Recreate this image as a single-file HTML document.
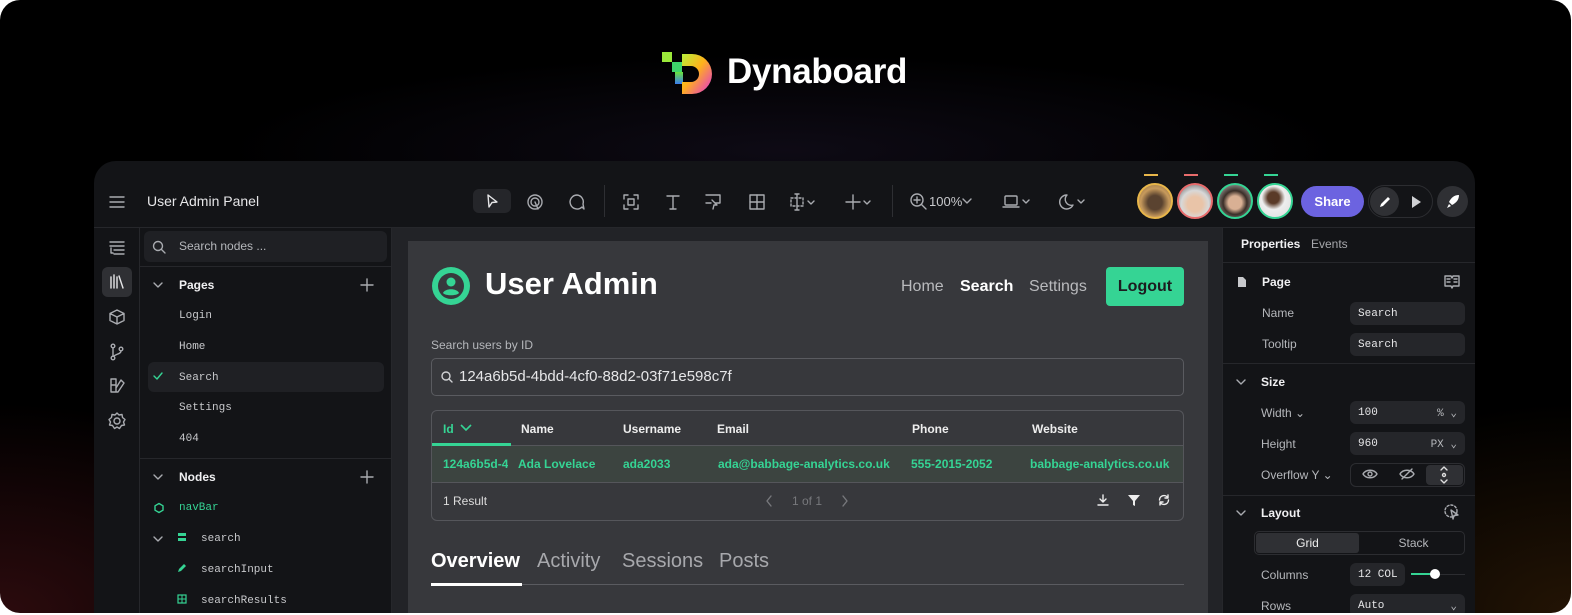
<!DOCTYPE html>
<html><head><meta charset="utf-8"><style>
*{box-sizing:border-box;margin:0;padding:0}
body{width:1572px;height:615px;background:#fff;font-family:"Liberation Sans",sans-serif;overflow:hidden;position:relative}
.frame{position:absolute;left:0;top:0;width:1571px;height:613px;border-radius:20px;overflow:hidden;
background:radial-gradient(ellipse 500px 300px at 0% 100%,rgba(80,20,25,.55),transparent 70%),radial-gradient(ellipse 450px 300px at 100% 100%,rgba(70,40,10,.5),transparent 70%),radial-gradient(ellipse 700px 120px at 50% 150px,rgba(40,30,60,.35),transparent 80%),#000}
.a{position:absolute}
.win{position:absolute;left:94px;top:161px;width:1381px;height:460px;background:#131417;border-radius:22px 22px 0 0;overflow:hidden}
.t{color:#e6e6e8;font-size:13px}
.mono{font-family:"Liberation Mono",monospace}
svg{position:absolute}
.ic{stroke:#a9abb0;fill:none;stroke-width:1.4;stroke-linecap:round;stroke-linejoin:round}
.inp{position:absolute;background:#25262a;border-radius:6px;font-family:"Liberation Mono",monospace;font-size:11px;color:#e6e6e8;padding-left:8px;display:flex;align-items:center}
.lbl{position:absolute;font-size:12px;color:#b5b7bb}
</style></head><body>
<div class="frame">
<svg style="left:662px;top:52px" width="50" height="44" viewBox="0 0 50 44">
<defs><linearGradient id="g" x1="0" y1="0" x2="1" y2="1"><stop offset="0" stop-color="#b7f03a"/><stop offset=".45" stop-color="#ffb21a"/><stop offset="1" stop-color="#e22fd9"/></linearGradient>
<linearGradient id="g2" x1="0" y1="0" x2="0" y2="1"><stop offset="0" stop-color="#6ae23a"/><stop offset="1" stop-color="#3a7bf0"/></linearGradient></defs>
<rect x="0" y="0" width="10" height="10" fill="#9be83a"/>
<rect x="10" y="10" width="10" height="10" fill="#3ed46a"/>
<rect x="13" y="20" width="8" height="12" fill="url(#g2)"/>
<path d="M20 2 H30 A20 20 0 0 1 30 42 H20 V30 H29 A8 8 0 0 0 29 14 H20 Z" fill="url(#g)"/>
</svg>
<div class="a" style="left:727px;top:52px;font-size:35px;font-weight:bold;color:#fff;letter-spacing:-0.3px">Dynaboard</div>

<div class="win">
 <div class="a" style="left:0;top:66px;width:1381px;height:1px;background:#26272b"></div>
 <svg style="left:15px;top:34px" width="16" height="14"><path class="ic" d="M1 2H15M1 7H15M1 12H15"/></svg>
 <div class="a t" style="left:53px;top:32px;font-size:14px">User Admin Panel</div>
 <div class="a" style="left:379px;top:28px;width:38px;height:24px;background:#25262a;border-radius:6px"></div>
 <svg style="left:390px;top:32px" width="16" height="16"><path class="ic" style="stroke:#e6e6e8" d="M4 2L13 9L8 9.5L5 14Z"/></svg>
 <svg style="left:432px;top:32px" width="18" height="18"><circle class="ic" cx="9" cy="9" r="7"/><circle class="ic" cx="9" cy="9" r="4"/><path class="ic" d="M9 9L12 16"/></svg>
 <svg style="left:474px;top:32px" width="18" height="18"><path class="ic" d="M9 2A7 7 0 1 0 14 14L16 16L15 11A7 7 0 0 0 9 2Z"/></svg>
 <div class="a" style="left:510px;top:24px;width:1px;height:32px;background:#2e2f33"></div>
 <svg style="left:528px;top:32px" width="18" height="18"><path class="ic" d="M2 6V2H6M12 2H16V6M16 12V16H12M6 16H2V12"/><rect class="ic" x="6" y="6" width="6" height="6"/></svg>
 <svg style="left:570px;top:32px" width="18" height="18"><path class="ic" d="M3 3H15M9 3V16M6 16H12"/></svg>
 <svg style="left:610px;top:32px" width="18" height="18"><path class="ic" d="M2 2H16V10H11M7 10H2Z"/><path class="ic" d="M8 7L13 12L10 12L9 16"/></svg>
 <svg style="left:654px;top:32px" width="18" height="18"><rect class="ic" x="2" y="2" width="14" height="14"/><path class="ic" d="M9 2V16M2 9H16"/></svg>
 <svg style="left:695px;top:32px" width="32" height="18"><rect class="ic" x="2" y="5" width="12" height="8" stroke-dasharray="2 2"/><path class="ic" d="M8 1V17M6 1H10M6 17H10M19 8L22 11L25 8"/></svg>
 <svg style="left:750px;top:32px" width="32" height="18"><path class="ic" d="M2 9H16M9 2V16M20 8L23 11L26 8"/></svg>
 <div class="a" style="left:798px;top:24px;width:1px;height:32px;background:#2e2f33"></div>
 <svg style="left:815px;top:31px" width="20" height="20"><circle class="ic" cx="8" cy="8" r="6"/><path class="ic" d="M12.5 12.5L17 17M8 5V11M5 8H11"/></svg>
 <div class="a t" style="left:835px;top:33px;font-size:13px;color:#c8c9cc">100%</div>
 <svg style="left:866px;top:35px" width="14" height="10"><path class="ic" d="M3 3L7 7L11 3"/></svg>
 <svg style="left:908px;top:32px" width="32" height="18"><rect class="ic" x="3" y="3" width="12" height="9" rx="1"/><path class="ic" d="M1 14H17M21 7L24 10L27 7"/></svg>
 <svg style="left:963px;top:32px" width="32" height="18"><path class="ic" d="M10 2A7 7 0 1 0 16 12A6 6 0 0 1 10 2Z"/><path class="ic" d="M21 7L24 10L27 7"/></svg>
 <div class="a" style="left:1050px;top:13px;width:14px;height:2px;background:#e8b64a"></div>
 <div class="a" style="left:1090px;top:13px;width:14px;height:2px;background:#e86c6c"></div>
 <div class="a" style="left:1130px;top:13px;width:14px;height:2px;background:#35d494"></div>
 <div class="a" style="left:1170px;top:13px;width:14px;height:2px;background:#35d494"></div>
 <div class="a" style="left:1043px;top:22px;width:36px;height:36px;border-radius:50%;border:2px solid #e8b64a;background:radial-gradient(circle at 50% 55%,#5a4330 30%,#c79a5c 60%,#8a6a40)"></div>
 <div class="a" style="left:1083px;top:22px;width:36px;height:36px;border-radius:50%;border:2px solid #e86c6c;background:radial-gradient(circle at 50% 60%,#e9c4a8 30%,#d8d8d8 55%,#555)"></div>
 <div class="a" style="left:1123px;top:22px;width:36px;height:36px;border-radius:50%;border:2px solid #35d494;background:radial-gradient(circle at 50% 55%,#d9b094 28%,#3a2e28 50%,#ccc)"></div>
 <div class="a" style="left:1163px;top:22px;width:36px;height:36px;border-radius:50%;border:2px solid #35d494;background:radial-gradient(circle at 45% 40%,#5a3a28 22%,#eee 45%,#ddd)"></div>
 <div class="a" style="left:1207px;top:25px;width:63px;height:31px;border-radius:16px;background:#6c63e0;color:#fff;font-size:13px;font-weight:bold;text-align:center;line-height:31px">Share</div>
 <div class="a" style="left:1274px;top:24px;width:65px;height:33px;border-radius:17px;border:1px solid #2c2d31"></div>
 <div class="a" style="left:1276px;top:26px;width:29px;height:29px;border-radius:50%;background:#2f3034"></div>
 <svg style="left:1283px;top:33px" width="16" height="16"><path d="M3 13L4 10L11 3L13 5L6 12Z" fill="#fff"/></svg>
 <svg style="left:1316px;top:34px" width="12" height="14"><path d="M2 1L11 7L2 13Z" fill="#cfd0d3"/></svg>
 <div class="a" style="left:1343px;top:25px;width:31px;height:31px;border-radius:50%;background:#2f3034"></div>
 <svg style="left:1350px;top:32px" width="18" height="18"><path d="M15 2C10 2 7 5 5 9L8 12C12 10 15 7 15 2Z M5 11L3 15L7 13Z" fill="#fff"/></svg>

 <div class="a" style="left:45px;top:67px;width:1px;height:400px;background:#26272b"></div>
 <svg style="left:14px;top:79px" width="18" height="16"><path class="ic" d="M2 2H16M2 6H16M6 10H16M6 14H16M3 8V13H5"/></svg>
 <div class="a" style="left:8px;top:106px;width:30px;height:30px;border-radius:6px;background:#2f3034"></div>
 <svg style="left:14px;top:112px" width="18" height="18"><path class="ic" style="stroke:#e6e6e8" d="M3 4V15M6 2V15M9 4V15M11 3L15 15"/></svg>
 <svg style="left:14px;top:147px" width="18" height="18"><path class="ic" d="M9 2L16 5.5V12.5L9 16L2 12.5V5.5Z M2 5.5L9 9L16 5.5M9 9V16"/></svg>
 <svg style="left:14px;top:182px" width="18" height="18"><circle class="ic" cx="5" cy="3" r="1.8"/><circle class="ic" cx="5" cy="15" r="1.8"/><circle class="ic" cx="13" cy="6" r="1.8"/><path class="ic" d="M5 5V13M13 8C13 11 8 11 6 13"/></svg>
 <svg style="left:14px;top:215px" width="18" height="18"><path class="ic" d="M3 3H8V16H3ZM3 9H8M8 12L13 4L16 7L10 16H3"/></svg>
 <svg style="left:13px;top:250px" width="20" height="20"><circle class="ic" cx="10" cy="10" r="3"/><path class="ic" d="M10 2L12 4L15 3.5L15.5 6.5L18 8.5L16.5 11L17.5 14L14.5 14.5L12.5 17.5L10 16L7.5 17.5L5.5 14.5L2.5 14L3.5 11L2 8.5L4.5 6.5L5 3.5L8 4Z"/></svg>

 <div class="a" style="left:297px;top:67px;width:1px;height:400px;background:#26272b"></div>
 <div class="a" style="left:50px;top:70px;width:243px;height:31px;border-radius:6px;background:#1f2024"></div>
 <svg style="left:58px;top:79px" width="14" height="14"><circle class="ic" cx="6" cy="6" r="4.5"/><path class="ic" d="M9.5 9.5L13 13"/></svg>
 <div class="a" style="left:85px;top:78px;font-size:12px;color:#b5b7bb">Search nodes ...</div>
 <div class="a" style="left:45px;top:105px;width:252px;height:1px;background:#26272b"></div>
 <svg style="left:58px;top:119px" width="12" height="10"><path class="ic" d="M2 3L6 7L10 3"/></svg>
 <div class="a" style="left:85px;top:117px;font-size:12px;font-weight:bold;color:#f0f0f2">Pages</div>
 <svg style="left:266px;top:117px" width="14" height="14"><path class="ic" d="M7 1V13M1 7H13"/></svg>
 <div class="a mono" style="left:85px;top:149px;font-size:11px;color:#c8c9cc">Login</div>
 <div class="a mono" style="left:85px;top:180px;font-size:11px;color:#c8c9cc">Home</div>
 <div class="a" style="left:54px;top:201px;width:236px;height:30px;border-radius:6px;background:#1f2024"></div>
 <svg style="left:58px;top:210px" width="12" height="10"><path class="ic" style="stroke:#35d494" d="M2 5L5 8L10 2"/></svg>
 <div class="a mono" style="left:85px;top:211px;font-size:11px;color:#c8c9cc">Search</div>
 <div class="a mono" style="left:85px;top:241px;font-size:11px;color:#c8c9cc">Settings</div>
 <div class="a mono" style="left:85px;top:272px;font-size:11px;color:#c8c9cc">404</div>
 <div class="a" style="left:45px;top:297px;width:252px;height:1px;background:#26272b"></div>
 <svg style="left:58px;top:311px" width="12" height="10"><path class="ic" d="M2 3L6 7L10 3"/></svg>
 <div class="a" style="left:85px;top:309px;font-size:12px;font-weight:bold;color:#f0f0f2">Nodes</div>
 <svg style="left:266px;top:309px" width="14" height="14"><path class="ic" d="M7 1V13M1 7H13"/></svg>
 <svg style="left:59px;top:341px" width="12" height="12"><path class="ic" style="stroke:#35d494" d="M6 1.5L10 3.8V8.2L6 10.5L2 8.2V3.8Z"/></svg>
 <div class="a mono" style="left:85px;top:341px;font-size:11px;color:#35d494">navBar</div>
 <svg style="left:58px;top:373px" width="12" height="10"><path class="ic" d="M2 3L6 7L10 3"/></svg>
 <div class="a" style="left:84px;top:372px;width:8px;height:3px;background:#35d494"></div>
 <div class="a" style="left:84px;top:377px;width:8px;height:3px;background:#35d494"></div>
 <div class="a mono" style="left:107px;top:372px;font-size:11px;color:#c8c9cc">search</div>
 <svg style="left:83px;top:402px" width="10" height="10"><path d="M1 9L2 6L7 1L9 3L4 8Z" fill="#35d494"/></svg>
 <div class="a mono" style="left:107px;top:403px;font-size:11px;color:#c8c9cc">searchInput</div>
 <svg style="left:83px;top:433px" width="10" height="10"><rect x="1" y="1" width="8" height="8" fill="none" stroke="#35d494" stroke-width="1.2"/><path d="M5 1V9M1 5H9" stroke="#35d494" stroke-width="1"/></svg>
 <div class="a mono" style="left:107px;top:434px;font-size:11px;color:#c8c9cc">searchResults</div>

 <div class="a" style="left:298px;top:67px;width:830px;height:400px;background:#222327"></div>
 <div class="a" style="left:314px;top:80px;width:800px;height:400px;background:#37383c"></div>
 <svg style="left:337px;top:105px" width="40" height="40"><circle cx="20" cy="20" r="19" fill="#35d494"/><circle cx="20" cy="20" r="13" fill="#37383c"/><circle cx="20" cy="16" r="4.5" fill="#35d494"/><path d="M12 27C14 22 26 22 28 27C26 30 14 30 12 27Z" fill="#35d494"/></svg>
 <div class="a" style="left:391px;top:105px;font-size:31px;font-weight:bold;color:#fff">User Admin</div>
 <div class="a" style="left:807px;top:117px;font-size:16px;color:#b9babd">Home</div>
 <div class="a" style="left:866px;top:117px;font-size:16px;font-weight:bold;color:#fff">Search</div>
 <div class="a" style="left:935px;top:117px;font-size:16px;color:#b9babd">Settings</div>
 <div class="a" style="left:1012px;top:106px;width:78px;height:39px;border-radius:4px;background:#35d494;font-size:16px;font-weight:bold;color:#1c1d20;text-align:center;line-height:39px">Logout</div>
 <div class="a" style="left:337px;top:177px;font-size:12px;color:#b5b7bb">Search users by ID</div>
 <div class="a" style="left:337px;top:197px;width:753px;height:38px;border:1px solid #5a5b60;border-radius:5px"></div>
 <svg style="left:346px;top:209px" width="14" height="14"><circle class="ic" style="stroke:#d0d1d4" cx="6" cy="6" r="4"/><path class="ic" style="stroke:#d0d1d4" d="M9 9L12 12"/></svg>
 <div class="a" style="left:365px;top:207px;font-size:15px;color:#e6e6e8">124a6b5d-4bdd-4cf0-88d2-03f71e598c7f</div>
 <div class="a" style="left:337px;top:249px;width:753px;height:111px;border:1px solid #55565b;border-radius:6px;overflow:hidden">
  <div class="a" style="left:0;top:34px;width:753px;height:1px;background:#55565b"></div>
  <div class="a" style="left:0;top:32px;width:79px;height:3px;background:#35d494"></div>
  <div class="a" style="left:0;top:35px;width:753px;height:36px;background:#3c4440"></div>
  <div class="a" style="left:0;top:71px;width:753px;height:1px;background:#55565b"></div>
  <div class="a" style="left:11px;top:11px;font-size:12px;font-weight:bold;color:#35d494">Id</div>
  <svg style="left:27px;top:12px" width="14" height="10"><path d="M2 2L7 7L12 2" stroke="#35d494" stroke-width="1.6" fill="none"/></svg>
  <div class="a" style="left:89px;top:11px;font-size:12px;font-weight:bold;color:#eee">Name</div>
  <div class="a" style="left:191px;top:11px;font-size:12px;font-weight:bold;color:#eee">Username</div>
  <div class="a" style="left:285px;top:11px;font-size:12px;font-weight:bold;color:#eee">Email</div>
  <div class="a" style="left:480px;top:11px;font-size:12px;font-weight:bold;color:#eee">Phone</div>
  <div class="a" style="left:600px;top:11px;font-size:12px;font-weight:bold;color:#eee">Website</div>
  <div class="a" style="left:11px;top:46px;width:65px;overflow:hidden;white-space:nowrap;font-size:12px;font-weight:bold;color:#35d494">124a6b5d-4bdd</div>
  <div class="a" style="left:86px;top:46px;font-size:12px;font-weight:bold;color:#35d494">Ada Lovelace</div>
  <div class="a" style="left:191px;top:46px;font-size:12px;font-weight:bold;color:#35d494">ada2033</div>
  <div class="a" style="left:286px;top:46px;font-size:12px;font-weight:bold;color:#35d494">ada@babbage-analytics.co.uk</div>
  <div class="a" style="left:479px;top:46px;font-size:12px;font-weight:bold;color:#35d494">555-2015-2052</div>
  <div class="a" style="left:598px;top:46px;font-size:12px;font-weight:bold;color:#35d494">babbage-analytics.co.uk</div>
  <div class="a" style="left:11px;top:83px;font-size:12px;color:#ddd">1 Result</div>
  <svg style="left:332px;top:83px" width="10" height="14"><path class="ic" style="stroke:#77787c" d="M7 2L3 7L7 12"/></svg>
  <div class="a" style="left:360px;top:83px;font-size:12px;color:#77787c">1 of 1</div>
  <svg style="left:408px;top:83px" width="10" height="14"><path class="ic" style="stroke:#77787c" d="M3 2L7 7L3 12"/></svg>
  <svg style="left:664px;top:82px" width="14" height="14"><path class="ic" style="stroke:#eee" d="M7 2V9M4 6L7 9L10 6M2 12H12"/></svg>
  <svg style="left:695px;top:82px" width="14" height="14"><path d="M1 2H13L8 8V13L6 12V8Z" fill="#eee"/></svg>
  <svg style="left:725px;top:82px" width="14" height="14"><path class="ic" style="stroke:#eee" d="M2.5 7A4.5 4.5 0 0 1 11 5M11.5 7A4.5 4.5 0 0 1 3 9M11 2V5H8M3 12V9H6"/></svg>
 </div>
 <div class="a" style="left:337px;top:389px;font-size:20px;font-weight:bold;color:#fff">Overview</div>
 <div class="a" style="left:443px;top:389px;font-size:20px;color:#a7a8ac">Activity</div>
 <div class="a" style="left:528px;top:389px;font-size:20px;color:#a7a8ac">Sessions</div>
 <div class="a" style="left:625px;top:389px;font-size:20px;color:#a7a8ac">Posts</div>
 <div class="a" style="left:337px;top:423px;width:753px;height:1px;background:#5a5b60"></div>
 <div class="a" style="left:337px;top:422px;width:91px;height:3px;background:#fff"></div>

 <div class="a" style="left:1128px;top:67px;width:1px;height:400px;background:#26272b"></div>
 <div class="a" style="left:1147px;top:76px;font-size:12px;font-weight:bold;color:#f0f0f2">Properties</div>
 <div class="a" style="left:1217px;top:76px;font-size:12px;color:#a7a8ac">Events</div>
 <div class="a" style="left:1129px;top:101px;width:252px;height:1px;background:#26272b"></div>
 <svg style="left:1143px;top:115px" width="10" height="12"><path d="M1 1H6L9 4V11H1Z" fill="#c8c9cc"/></svg>
 <div class="a" style="left:1168px;top:114px;font-size:12px;font-weight:bold;color:#f0f0f2">Page</div>
 <svg style="left:1350px;top:113px" width="16" height="16"><path class="ic" d="M1 2H7L8 4L9 2H15V12H9L8 14L7 12H1ZM3 5H6M3 8H6M10 5H13M10 8H13"/></svg>
 <div class="lbl" style="left:1168px;top:145px">Name</div>
 <div class="inp" style="left:1256px;top:141px;width:115px;height:23px">Search</div>
 <div class="lbl" style="left:1168px;top:176px">Tooltip</div>
 <div class="inp" style="left:1256px;top:172px;width:115px;height:23px">Search</div>
 <div class="a" style="left:1129px;top:202px;width:252px;height:1px;background:#26272b"></div>
 <svg style="left:1141px;top:216px" width="12" height="10"><path class="ic" d="M2 3L6 7L10 3"/></svg>
 <div class="a" style="left:1167px;top:214px;font-size:12px;font-weight:bold;color:#f0f0f2">Size</div>
 <div class="lbl" style="left:1167px;top:245px">Width ⌄</div>
 <div class="inp" style="left:1256px;top:240px;width:115px;height:23px">100<span style="position:absolute;right:8px;color:#b5b7bb">% ⌄</span></div>
 <div class="lbl" style="left:1167px;top:276px">Height</div>
 <div class="inp" style="left:1256px;top:271px;width:115px;height:23px">960<span style="position:absolute;right:8px;color:#b5b7bb">PX ⌄</span></div>
 <div class="lbl" style="left:1167px;top:307px">Overflow Y ⌄</div>
 <div class="a" style="left:1256px;top:302px;width:115px;height:24px;border:1px solid #2c2d31;border-radius:6px"></div>
 <div class="a" style="left:1332px;top:304px;width:37px;height:20px;border-radius:4px;background:#2f3034"></div>
 <svg style="left:1268px;top:307px" width="16" height="12"><path class="ic" d="M1 6C4 1 12 1 15 6C12 11 4 11 1 6Z"/><circle class="ic" cx="8" cy="6" r="2"/></svg>
 <svg style="left:1305px;top:307px" width="16" height="12"><path class="ic" d="M1 6C4 1 12 1 15 6C12 11 4 11 1 6ZM3 11L13 1"/></svg>
 <svg style="left:1343px;top:304px" width="14" height="20"><path class="ic" style="stroke:#ddd" d="M4 5L7 2L10 5M4 15L7 18L10 15"/><circle class="ic" style="stroke:#ddd" cx="7" cy="10" r="1.5"/></svg>
 <div class="a" style="left:1129px;top:334px;width:252px;height:1px;background:#26272b"></div>
 <svg style="left:1141px;top:347px" width="12" height="10"><path class="ic" d="M2 3L6 7L10 3"/></svg>
 <div class="a" style="left:1167px;top:345px;font-size:12px;font-weight:bold;color:#f0f0f2">Layout</div>
 <svg style="left:1350px;top:343px" width="16" height="16"><circle class="ic" cx="7" cy="7" r="6" stroke-dasharray="2 2"/><path class="ic" d="M7 6L14 11L10 11.5L9 15Z"/></svg>
 <div class="a" style="left:1160px;top:370px;width:211px;height:24px;border:1px solid #2c2d31;border-radius:5px"></div>
 <div class="a" style="left:1162px;top:372px;width:103px;height:20px;border-radius:3px;background:#2f3034;text-align:center;font-size:12px;color:#eee;line-height:20px">Grid</div>
 <div class="a" style="left:1268px;top:372px;width:103px;height:20px;text-align:center;font-size:12px;color:#b5b7bb;line-height:20px">Stack</div>
 <div class="lbl" style="left:1167px;top:407px">Columns</div>
 <div class="inp" style="left:1256px;top:402px;width:55px;height:23px">12 COL</div>
 <div class="a" style="left:1317px;top:413px;width:54px;height:1px;background:#2c2d31"></div>
 <div class="a" style="left:1317px;top:412px;width:24px;height:2px;background:#35d494"></div>
 <div class="a" style="left:1336px;top:408px;width:10px;height:10px;border-radius:50%;background:#fff"></div>
 <div class="lbl" style="left:1167px;top:438px">Rows</div>
 <div class="inp" style="left:1256px;top:433px;width:115px;height:23px">Auto<span style="position:absolute;right:8px;color:#b5b7bb">⌄</span></div>
</div>
</div>
</body></html>
